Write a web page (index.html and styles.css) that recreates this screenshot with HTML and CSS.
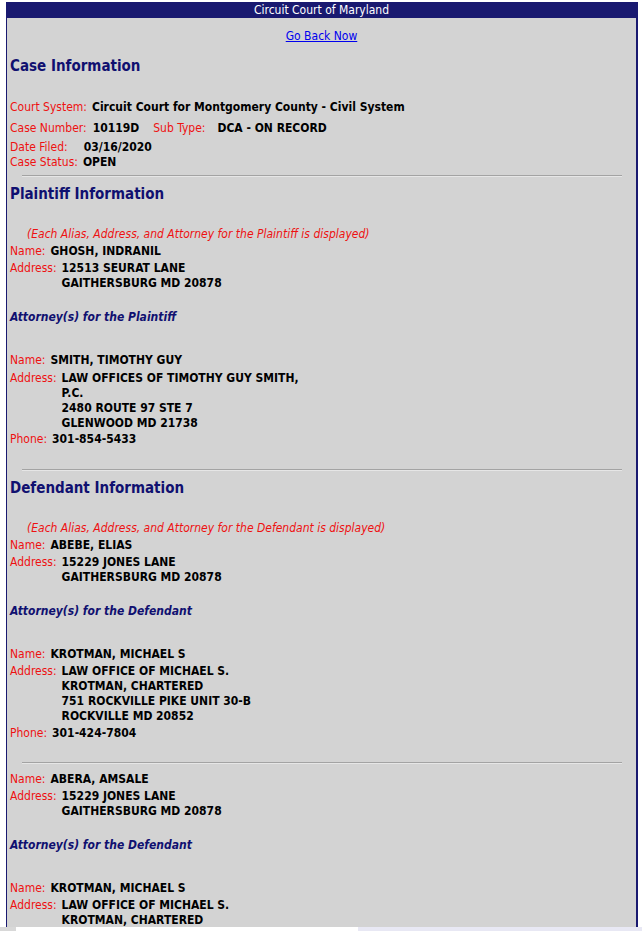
FILE: index.html
```html
<!DOCTYPE html>
<html>
<head>
<meta charset="utf-8">
<title>Circuit Court of Maryland</title>
<link rel="stylesheet" href="styles.css">
</head>
<body>
<div class="page">
  <div class="topbar">Circuit Court of Maryland</div>
  <div class="back"><a href="#">Go Back Now</a></div>

  <h2 class="sec sec-case">Case Information</h2>
  <div class="caseinfo">
    <div class="crow r1"><span class="lbl">Court System:</span><span class="val">Circuit Court for Montgomery County - Civil System</span></div>
    <div class="crow r2"><span class="lbl l-num">Case Number:</span><span class="val v-num">10119D</span><span class="lbl l-sub">Sub Type:</span><span class="val v-sub">DCA - ON RECORD</span></div>
    <div class="crow r3"><span class="lbl">Date Filed:</span><span class="val v-date">03/16/2020</span></div>
    <div class="crow r4"><span class="lbl">Case Status:</span><span class="val">OPEN</span></div>
  </div>
  <hr class="sep sep1">

  <h2 class="sec">Plaintiff Information</h2>
  <div class="note">(Each Alias, Address, and Attorney for the Plaintiff is displayed)</div>
  <div class="party">
    <div class="row"><span class="lbl">Name:</span><span class="val">GHOSH, INDRANIL</span></div>
    <div class="row"><span class="lbl">Address:</span><div class="val lines"><div>12513 SEURAT LANE</div><div>GAITHERSBURG MD 20878</div></div></div>
  </div>
  <h3 class="atty">Attorney(s) for the Plaintiff</h3>
  <div class="party atty-party">
    <div class="row"><span class="lbl">Name:</span><span class="val">SMITH, TIMOTHY GUY</span></div>
    <div class="row addr"><span class="lbl">Address:</span><div class="val lines"><div>LAW OFFICES OF TIMOTHY GUY SMITH,</div><div>P.C.</div><div>2480 ROUTE 97 STE 7</div><div>GLENWOOD MD 21738</div></div></div>
    <div class="row phone"><span class="lbl">Phone:</span><span class="val">301-854-5433</span></div>
  </div>
  <hr class="sep sep2">

  <h2 class="sec">Defendant Information</h2>
  <div class="note">(Each Alias, Address, and Attorney for the Defendant is displayed)</div>
  <div class="party">
    <div class="row"><span class="lbl">Name:</span><span class="val">ABEBE, ELIAS</span></div>
    <div class="row"><span class="lbl">Address:</span><div class="val lines"><div>15229 JONES LANE</div><div>GAITHERSBURG MD 20878</div></div></div>
  </div>
  <h3 class="atty">Attorney(s) for the Defendant</h3>
  <div class="party atty-party">
    <div class="row"><span class="lbl">Name:</span><span class="val">KROTMAN, MICHAEL S</span></div>
    <div class="row"><span class="lbl">Address:</span><div class="val lines"><div>LAW OFFICE OF MICHAEL S.</div><div>KROTMAN, CHARTERED</div><div>751 ROCKVILLE PIKE UNIT 30-B</div><div>ROCKVILLE MD 20852</div></div></div>
    <div class="row phone phone-b"><span class="lbl">Phone:</span><span class="val">301-424-7804</span></div>
  </div>
  <hr class="sep sep3">

  <div class="party party-next">
    <div class="row"><span class="lbl">Name:</span><span class="val">ABERA, AMSALE</span></div>
    <div class="row"><span class="lbl">Address:</span><div class="val lines"><div>15229 JONES LANE</div><div>GAITHERSBURG MD 20878</div></div></div>
  </div>
  <h3 class="atty">Attorney(s) for the Defendant</h3>
  <div class="party atty-party">
    <div class="row"><span class="lbl">Name:</span><span class="val">KROTMAN, MICHAEL S</span></div>
    <div class="row"><span class="lbl">Address:</span><div class="val lines"><div>LAW OFFICE OF MICHAEL S.</div><div>KROTMAN, CHARTERED</div><div>751 ROCKVILLE PIKE UNIT 30-B</div><div>ROCKVILLE MD 20852</div></div></div>
    <div class="row phone phone-b"><span class="lbl">Phone:</span><span class="val">301-424-7804</span></div>
  </div>
</div>
<div class="bottomstrip"><span class="bs-a"></span><span class="bs-b"></span><span class="bs-c"></span></div>
</body>
</html>
```
FILE: styles.css
```css
html, body {
  margin: 0;
  padding: 0;
  background: #ffffff;
}
body {
  font-family: "DejaVu Sans Condensed", "DejaVu Sans", sans-serif;
  font-size: 12px;
  line-height: 15px;
  color: #000;
  overflow: hidden;
}
.page {
  margin: 2px 4px 0 6px;
  border-left: 1px solid #191970;
  border-right: 2px solid #191970;
  background: #d3d3d3;
  padding: 0 0 40px 0;
  min-height: 1000px;
}
.topbar {
  background: #191970;
  color: #ffffff;
  text-align: center;
  height: 16px;
  line-height: 16px;
  font-size: 12px;
}
.back {
  text-align: center;
  margin-top: 11px;
}
.back a {
  color: #0000ee;
  text-decoration: underline;
}
.sec {
  margin: 0;
  padding-left: 3px;
  font-size: 15px;
  line-height: 18px;
  color: #101070;
  font-weight: bold;
}
.sec-case {
  margin-top: 13px;
}
.caseinfo {
  margin-top: 25px;
  padding-left: 3px;
}
.crow {
  display: flex;
  align-items: baseline;
}
.r2 { margin-top: 6px; }
.r3 { margin-top: 4px; }
.lbl {
  color: #ee1111;
  margin-right: 5px;
}
.val {
  font-weight: bold;
}
.l-num { margin-right: 6px; }
.v-num { margin-right: 14px; }
.l-sub { margin-right: 12px; }
.v-date { margin-left: 11px; }
.sep {
  width: 600px;
  margin: 5px auto 8px;
  border: 0;
  border-top: 1px solid #a3a3a3;
  border-bottom: 1px solid #e6e6e6;
  height: 0;
}
.sep2 { margin-top: 22px; }
.sep3 { margin-top: 21px; margin-bottom: 8px; }
.note {
  color: #ee1111;
  font-style: italic;
  padding-left: 20px;
  margin-top: 24px;
}
.party {
  padding-left: 3px;
}
.row {
  display: flex;
  align-items: baseline;
  margin-top: 2px;
}
.row.addr { margin-top: 3px; }
.lines {
  display: flex;
  flex-direction: column;
}
.phone { margin-top: 1px; }
.phone-b { margin-top: 2px; }
.atty {
  margin: 19px 0 0;
  padding-left: 3px;
  font-size: 12px;
  line-height: 15px;
  font-weight: bold;
  font-style: italic;
  color: #101070;
}
.atty-party {
  margin-top: 28px;
}
.bottomstrip {
  position: fixed;
  left: 0;
  right: 0;
  bottom: 0;
  height: 4px;
  display: flex;
}
.bs-a { width: 16px; background: #d8d8d8; }
.bs-b { width: 342px; background: #ffffff; }
.bs-c { flex: 1; background: #e8e8f4; }
```
